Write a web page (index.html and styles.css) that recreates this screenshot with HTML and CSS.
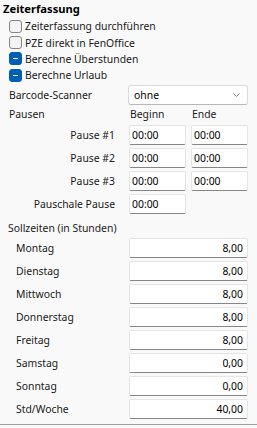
FILE: index.html
```html
<!DOCTYPE html>
<html lang="de">

<head>
    <meta charset="UTF-8">
    <title>Zeiterfassung</title>
    <link rel="stylesheet" href="styles.css">
</head>

<body>
    <div class="panel">
        <h1 class="title">Zeiterfassung</h1>

        <!-- options -->
        <div class="checks">
            <label class="check"><span class="box"></span>Zeiterfassung durchführen</label>
            <label class="check"><span class="box"></span>PZE direkt in FenOffice</label>
            <label class="check"><span class="box on"></span>Berechne Überstunden</label>
            <label class="check"><span class="box on"></span>Berechne Urlaub</label>
        </div>

        <!-- scanner -->
        <div class="scanner">
            <span class="scanner-label">Barcode-Scanner</span>
            <div class="select">
                <span>ohne</span>
                <svg width="7" height="4" viewBox="0 0 7 4"><path d="M0.5 0.5 L3.5 3.5 L6.5 0.5" fill="none" stroke="#7a7a7a" stroke-width="1"/></svg>
            </div>
        </div>

        <!-- breaks -->
        <div class="pausen">
            <span class="pausen-head">Pausen</span>
            <span class="col-head">Beginn</span>
            <span class="col-head">Ende</span>

            <span class="plabel">Pause #1</span>
            <div class="field">00:00</div>
            <div class="field">00:00</div>

            <span class="plabel">Pause #2</span>
            <div class="field">00:00</div>
            <div class="field">00:00</div>

            <span class="plabel">Pause #3</span>
            <div class="field">00:00</div>
            <div class="field">00:00</div>

            <span class="plabel">Pauschale Pause</span>
            <div class="field">00:00</div>
        </div>

        <!-- target hours -->
        <div class="soll-head">Sollzeiten (in Stunden)</div>
        <div class="soll">
            <span class="day">Montag</span><div class="field num">8,00</div>
            <span class="day">Dienstag</span><div class="field num">8,00</div>
            <span class="day">Mittwoch</span><div class="field num">8,00</div>
            <span class="day">Donnerstag</span><div class="field num">8,00</div>
            <span class="day">Freitag</span><div class="field num">8,00</div>
            <span class="day">Samstag</span><div class="field num">0,00</div>
            <span class="day">Sonntag</span><div class="field num">0,00</div>
            <span class="day">Std/Woche</span><div class="field num">40,00</div>
        </div>
    </div>
</body>

</html>
```

FILE: styles.css
```css
body {
    margin: 0;
    background: #f9f9f9;
    font-family: 'Noto Sans', sans-serif;
    font-size: 10.4px;
    color: #1a1a1a;
}

.panel {
    width: 257px;
    height: 425px;
    border-bottom: 1px solid #a0a0a0;
    box-sizing: border-box;
    padding-top: 1px;
}

.title {
    margin: 0 0 0 3px;
    font-size: 11.2px;
    font-weight: 700;
    line-height: 16px;
    color: #000;
}

.checks {
    display: flex;
    flex-direction: column;
    padding-left: 9px;
    margin-top: 1px;
}

.check {
    display: flex;
    align-items: center;
    gap: 3px;
    height: 16.4px;
}

.box {
    width: 11px;
    height: 11px;
    border: 1px solid #858585;
    border-radius: 3px;
    background: #f3f3f3;
    position: relative;
}

.box.on {
    background: #005fb8;
    border-color: #005fb8;
}

.box.on::after {
    content: "";
    position: absolute;
    left: 3px;
    top: 5px;
    width: 5px;
    height: 1px;
    background: #fff;
}

.scanner {
    display: flex;
    align-items: center;
    margin-top: 1px;
    padding-left: 9px;
}

.scanner-label {
    width: 119px;
}

.select {
    width: 120px;
    height: 20px;
    box-sizing: border-box;
    background: #fff;
    border: 1px solid #dadada;
    border-bottom-color: #b8b8b8;
    border-radius: 3px;
    display: flex;
    align-items: center;
    justify-content: space-between;
    padding: 0 7px 0 5px;
    color: #000;
}

.pausen {
    display: grid;
    grid-template-columns: 124px 57px 57px;
    grid-template-rows: 16px repeat(4, 20px);
    column-gap: 5px;
    row-gap: 3px;
    margin-top: 1px;
}

.pausen-head {
    padding-left: 9px;
    line-height: 16px;
}

.col-head {
    padding-left: 1px;
    line-height: 16px;
}

.plabel {
    text-align: right;
    padding-right: 9px;
    align-self: center;
}

.field {
    background: #fff;
    border: 1px solid #e5e5e5;
    border-bottom-color: #868686;
    border-radius: 2px;
    box-sizing: border-box;
    height: 20px;
    line-height: 18px;
    padding: 0 2px;
    color: #000;
}

.num {
    text-align: right;
    padding-right: 4px;
}

.soll-head {
    padding-left: 8px;
    margin-top: 6px;
    line-height: 16px;
}

.soll {
    display: grid;
    grid-template-columns: 129px 119px;
    row-gap: 3px;
    grid-auto-rows: 20px;
    margin-top: 2px;
}

.day {
    padding-left: 16px;
    align-self: center;
}
```
